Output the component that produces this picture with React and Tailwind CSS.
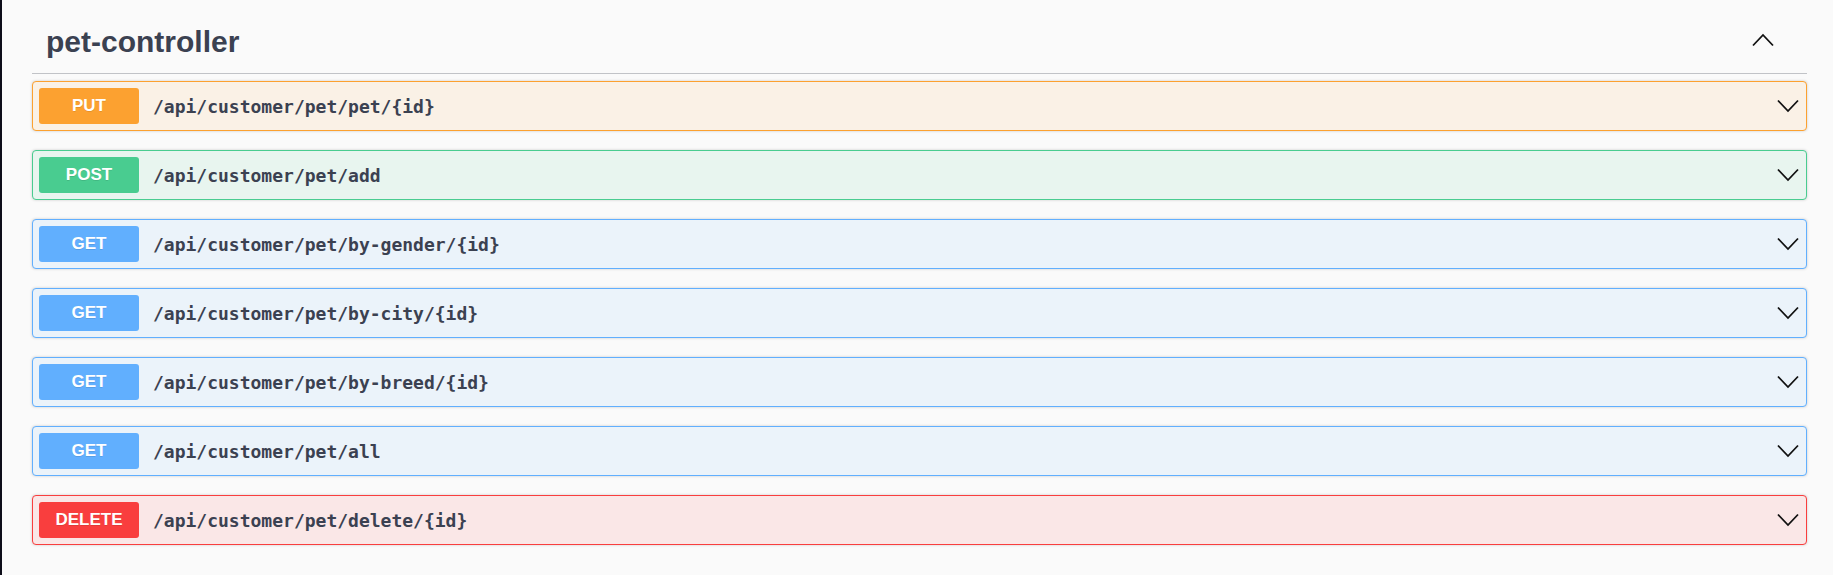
import React from "react";

const endpoints = [
    { method: "PUT", path: "/api/customer/pet/pet/{id}", row: "border-[#fca130] bg-[#faf1e6]", badge: "bg-[#fca130]" },
    { method: "POST", path: "/api/customer/pet/add", row: "border-[#49cc90] bg-[#e8f5ef]", badge: "bg-[#49cc90]" },
    { method: "GET", path: "/api/customer/pet/by-gender/{id}", row: "border-[#61affe] bg-[#ebf3fa]", badge: "bg-[#61affe]" },
    { method: "GET", path: "/api/customer/pet/by-city/{id}", row: "border-[#61affe] bg-[#ebf3fa]", badge: "bg-[#61affe]" },
    { method: "GET", path: "/api/customer/pet/by-breed/{id}", row: "border-[#61affe] bg-[#ebf3fa]", badge: "bg-[#61affe]" },
    { method: "GET", path: "/api/customer/pet/all", row: "border-[#61affe] bg-[#ebf3fa]", badge: "bg-[#61affe]" },
    { method: "DELETE", path: "/api/customer/pet/delete/{id}", row: "border-[#f93e3e] bg-[#fae7e7]", badge: "bg-[#f93e3e]" },
];

// thin chevron used for collapse / expand
const Chevron = ({ up }) => (
    <svg width="22" height="14" viewBox="0 0 22 14" fill="none">
        <polyline
            points={up ? "1,12.5 11,2 21,12.5" : "1,1.5 11,12 21,1.5"}
            stroke="#111"
            strokeWidth="1.8"
        />
    </svg>
);

const App = () => {
    return (
        <div className="w-[1833px] h-[575px] bg-[#fafafa] border-l-2 border-[#0d0d19] pl-[30px] pr-[26px] font-['Liberation_Sans',Arial,sans-serif]">
            {/* Tag header */}
            <div className="flex items-start justify-between pl-[14px] pt-[24px] pb-[13px] border-b border-[#c1c3c7]">
                <h3 className="text-[30px] leading-[36px] font-bold text-[#3b4151]">pet-controller</h3>
                <div className="mr-[33px] mt-[9px]">
                    <Chevron up />
                </div>
            </div>

            {/* Operations */}
            <div className="flex flex-col gap-[19px] mt-[7px]">
                {endpoints.map((ep) => (
                    <div
                        key={ep.path}
                        className={`flex items-center h-[50px] border rounded-[4px] shadow-[0_0_3px_rgba(0,0,0,0.19)] pl-[6px] ${ep.row}`}
                    >
                        <span
                            className={`w-[100px] h-[36px] flex items-center justify-center rounded-[3px] text-white text-[17px] font-bold [text-shadow:0_1px_0_rgba(0,0,0,0.1)] ${ep.badge}`}
                        >
                            {ep.method}
                        </span>
                        <span className="ml-[14px] flex-grow text-[18px] font-bold text-[#3b4151] font-['DejaVu_Sans_Mono',monospace]">
                            {ep.path}
                        </span>
                        <div className="mr-[7px]">
                            <Chevron />
                        </div>
                    </div>
                ))}
            </div>
        </div>
    );
};

export default App;
